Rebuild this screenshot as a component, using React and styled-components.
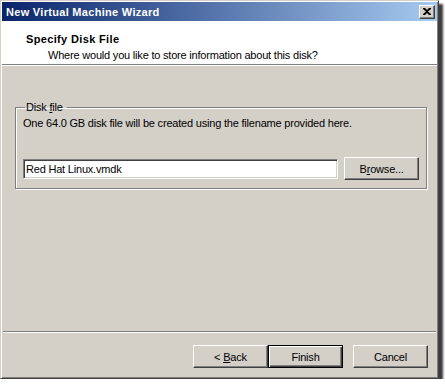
import React from 'react';
import styled, { createGlobalStyle } from 'styled-components';

const GlobalStyle = createGlobalStyle`
  html, body {
    margin: 0;
    padding: 0;
    background: #ffffff;
  }
  body {
    font-family: 'Liberation Sans', Arial, sans-serif;
    font-size: 11px;
    letter-spacing: -0.2px;
    color: #000;
  }
`;

const Window = styled.div`
  box-sizing: border-box;
  width: 439px;
  height: 379px;
  display: flex;
  flex-direction: column;
  padding: 1px;
  background: #d4d0c8;
  border: 1px solid;
  border-color: #d4d0c8 #404040 #404040 #d4d0c8;
  box-shadow: inset 1px 1px #ffffff, inset -1px -1px #808080,
    4px 4px 2px rgba(40, 40, 40, 0.9);
`;

const TitleBar = styled.div`
  height: 19px;
  flex: none;
  display: flex;
  align-items: center;
  justify-content: space-between;
  padding: 0 2px 0 4px;
  background: linear-gradient(to right, #0a246a, #a6caf0);
  color: #fff;
  font-weight: bold;
  font-size: 11px;
  letter-spacing: 0.3px;
`;

const CloseButton = styled.div`
  box-sizing: border-box;
  width: 16px;
  height: 14px;
  display: flex;
  align-items: center;
  justify-content: center;
  background: #d4d0c8;
  border: 1px solid;
  border-color: #ffffff #404040 #404040 #ffffff;
  box-shadow: inset -1px -1px #808080;
`;

const Header = styled.div`
  height: 43px;
  flex: none;
  background: #ffffff;
  padding: 12px 0 0 24px;
  box-sizing: border-box;
`;

const HeaderTitle = styled.div`
  font-weight: bold;
  letter-spacing: 0.35px;
  line-height: 13px;
`;

const HeaderSub = styled.div`
  margin: 3px 0 0 22px;
  line-height: 13px;
`;

const Etched = styled.div`
  height: 0;
  flex: none;
  border-top: 1px solid #808080;
  border-bottom: 1px solid #ffffff;
  margin: ${({ $inset }) => ($inset ? '0 1px 0 1px' : '0')};
`;

const Body = styled.div`
  flex: 1;
  padding: 35px 10px 0 13px;
`;

const Group = styled.fieldset`
  margin: 0;
  padding: 3px 7px 8px 7px;
  border: 1px solid #808080;
  box-shadow: inset 1px 1px #ffffff, 1px 1px #ffffff;
  min-width: 0;
`;

const Legend = styled.legend`
  padding: 0 4px 0 1px;
  margin-left: 2px;
  line-height: 13px;
`;

const Description = styled.div`
  line-height: 13px;
`;

const FileRow = styled.div`
  display: flex;
  align-items: center;
  gap: 6px;
  margin-top: 27px;
`;

const TextInput = styled.div`
  box-sizing: border-box;
  width: 316px;
  height: 20px;
  display: flex;
  align-items: center;
  padding: 0 2px;
  background: #ffffff;
  border: 1px solid;
  border-color: #808080 #ffffff #ffffff #808080;
  box-shadow: inset 1px 1px #404040, inset -1px -1px #d4d0c8;
`;

const Button = styled.div`
  box-sizing: border-box;
  width: 75px;
  height: 23px;
  display: flex;
  align-items: center;
  justify-content: center;
  background: #d4d0c8;
  border: 1px solid;
  border-color: ${({ $default }) =>
    $default ? '#000000' : '#ffffff #404040 #404040 #ffffff'};
  box-shadow: ${({ $default }) =>
    $default
      ? 'inset 1px 1px #ffffff, inset -1px -1px #404040, inset -2px -2px #808080'
      : 'inset -1px -1px #808080'};
`;

const Footer = styled.div`
  flex: none;
  display: flex;
  justify-content: flex-end;
  padding: 12px 9px 9px 0;
`;

const Gap = styled.div`
  width: ${({ $w }) => $w}px;
`;

const Key = styled.span`
  text-decoration: underline;
`;

export default function App() {
  return (
    <>
      <GlobalStyle />
      <Window>
        <TitleBar>
          <span>New Virtual Machine Wizard</span>
          <CloseButton>
            <svg width="8" height="7" viewBox="0 0 8 7">
              <path d="M0 0h2l2 2 2-2h2v1L5 3.5 8 6v1H6L4 5 2 7H0V6l3-2.5L0 1z" fill="#000" />
            </svg>
          </CloseButton>
        </TitleBar>
        <Header>
          <HeaderTitle>Specify Disk File</HeaderTitle>
          <HeaderSub>Where would you like to store information about this disk?</HeaderSub>
        </Header>
        <Etched />
        <Body>
          <Group>
            <Legend>
              Disk <Key>f</Key>ile
            </Legend>
            <Description>
              One 64.0 GB disk file will be created using the filename provided here.
            </Description>
            <FileRow>
              <TextInput>Red Hat Linux.vmdk</TextInput>
              <Button>
                B<Key>r</Key>owse...
              </Button>
            </FileRow>
          </Group>
        </Body>
        <Etched $inset />
        <Footer>
          <Button>
            &lt;&nbsp;<Key>B</Key>ack
          </Button>
          <Gap $w={0} />
          <Button $default>Finish</Button>
          <Gap $w={10} />
          <Button>Cancel</Button>
        </Footer>
      </Window>
    </>
  );
}
